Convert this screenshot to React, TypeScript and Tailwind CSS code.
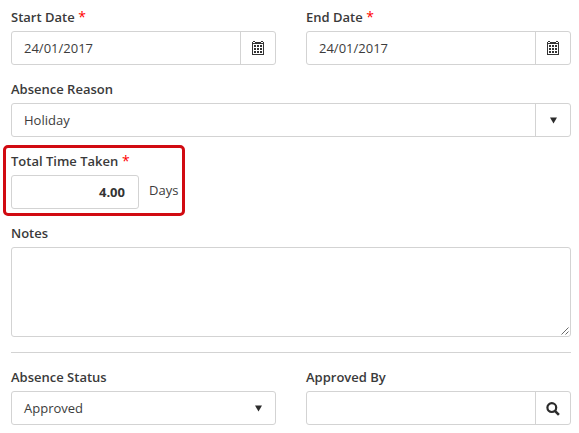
import type { ReactNode } from 'react';

const boxStyles = 'flex h-[34px] rounded-[3px] border border-[#d3d3d3] bg-white';
const inputStyles = 'min-w-0 flex-1 bg-transparent px-3 pt-px text-[13px] text-[#3c3c3c] outline-none';

const CalendarIcon = () => (
  <svg width="12" height="14" viewBox="0 0 12 14" fill="#333" shapeRendering="crispEdges">
    <path d="M0 1h1v13H0zM11 1h1v13h-1zM0 13h12v1H0zM1 0h2v1H1zM9 0h2v1H9zM3 1h6v1H3zM0 2h12v1H0z" />
    <path d="M2 4h2v2H2zM5 4h2v2H5zM8 4h2v2H8zM2 7h2v2H2zM5 7h2v2H5zM8 7h2v2H8zM2 10h2v2H2zM5 10h2v2H5zM8 10h2v2H8z" />
  </svg>
);

const SearchIcon = () => (
  <svg className="mt-px" width="14" height="14" viewBox="0 0 14 14" fill="none" stroke="#2b2b2b">
    <circle cx="5.8" cy="5.6" r="4.4" strokeWidth="2.2" />
    <path d="M8.9 8.8l4 4" strokeWidth="2.6" />
  </svg>
);

const CaretIcon = () => (
  <svg width="7" height="7" viewBox="0 0 7 7" fill="#2b2b2b">
    <path d="M0 0.5h7L3.5 6.5z" />
  </svg>
);

interface FieldProps {
  label: string;
  required?: boolean;
  className?: string;
  children: ReactNode;
}

const Field = ({ label, required, className, children }: FieldProps) => (
  <div className={className}>
    <label className="mb-1 block h-5 text-[13px] leading-5 font-semibold text-[#3a3a3a]">
      {label}
      {required && <span className="text-sm leading-none font-medium text-[#ff0000]"> *</span>}
    </label>
    {children}
  </div>
);

interface AddonInputProps {
  label: string;
  value: string;
  icon: ReactNode;
}

const AddonInput = ({ label, value, icon }: AddonInputProps) => (
  <div className={boxStyles}>
    <input className={inputStyles} aria-label={label} defaultValue={value} />
    <button
      type="button"
      aria-label={`Open ${label}`}
      className="flex w-[35px] items-center justify-center border-l border-[#d3d3d3]"
    >
      {icon}
    </button>
  </div>
);

const App = () => {
  return (
    <form className="flex h-[433px] w-[579px] flex-col gap-3.5 bg-white pt-[7px] pr-2 pl-[11px] font-['Open_Sans',sans-serif]">
      <div className="grid grid-cols-2 gap-[30px]">
        <Field label="Start Date" required>
          <AddonInput label="Start Date" value="24/01/2017" icon={<CalendarIcon />} />
        </Field>
        <Field label="End Date" required>
          <AddonInput label="End Date" value="24/01/2017" icon={<CalendarIcon />} />
        </Field>
      </div>

      <Field label="Absence Reason">
        <AddonInput label="Absence Reason" value="Holiday" icon={<CaretIcon />} />
      </Field>

      <div className="-mt-1.5 -mb-[7px] -ml-2 h-[71px] w-[182px] rounded-[5px] border-3 border-[#d10a11] pt-[3px] pl-[5px]">
        <Field label="Total Time Taken" required>
          <div className="flex">
            <div className={`${boxStyles} w-32`}>
              <input
                className="w-full bg-transparent pt-px pr-[13px] pl-3 text-right text-[13px] font-bold text-[#333] outline-none"
                aria-label="Total Time Taken"
                defaultValue="4.00"
              />
            </div>
            <span className="ml-2.5 text-[13px] leading-[30px] text-[#3c3c3c]">Days</span>
          </div>
        </Field>
      </div>

      <Field label="Notes">
        <div className="relative h-[90px] rounded-[3px] border border-[#d3d3d3]">
          <textarea
            className="block h-full w-full resize-none bg-transparent px-3 py-2 text-[13px] outline-none"
            aria-label="Notes"
          />
          <svg className="absolute right-px bottom-px" width="8" height="8" viewBox="0 0 8 8" stroke="#444" strokeWidth="0.8">
            <path d="M0.5 7.5l7-7M4.5 7.5l3-3" />
          </svg>
        </div>
      </Field>

      <hr className="mt-px border-[#d3d3d3]" />

      <div className="grid grid-cols-2 gap-[30px]">
        <Field label="Absence Status">
          <div className={`${boxStyles} items-center justify-between pr-[13px] pl-3`}>
            <span className="pt-px text-[13px] text-[#3c3c3c]">Approved</span>
            <CaretIcon />
          </div>
        </Field>
        <Field label="Approved By">
          <AddonInput label="Approved By" value="" icon={<SearchIcon />} />
        </Field>
      </div>
    </form>
  );
};

export default App;
